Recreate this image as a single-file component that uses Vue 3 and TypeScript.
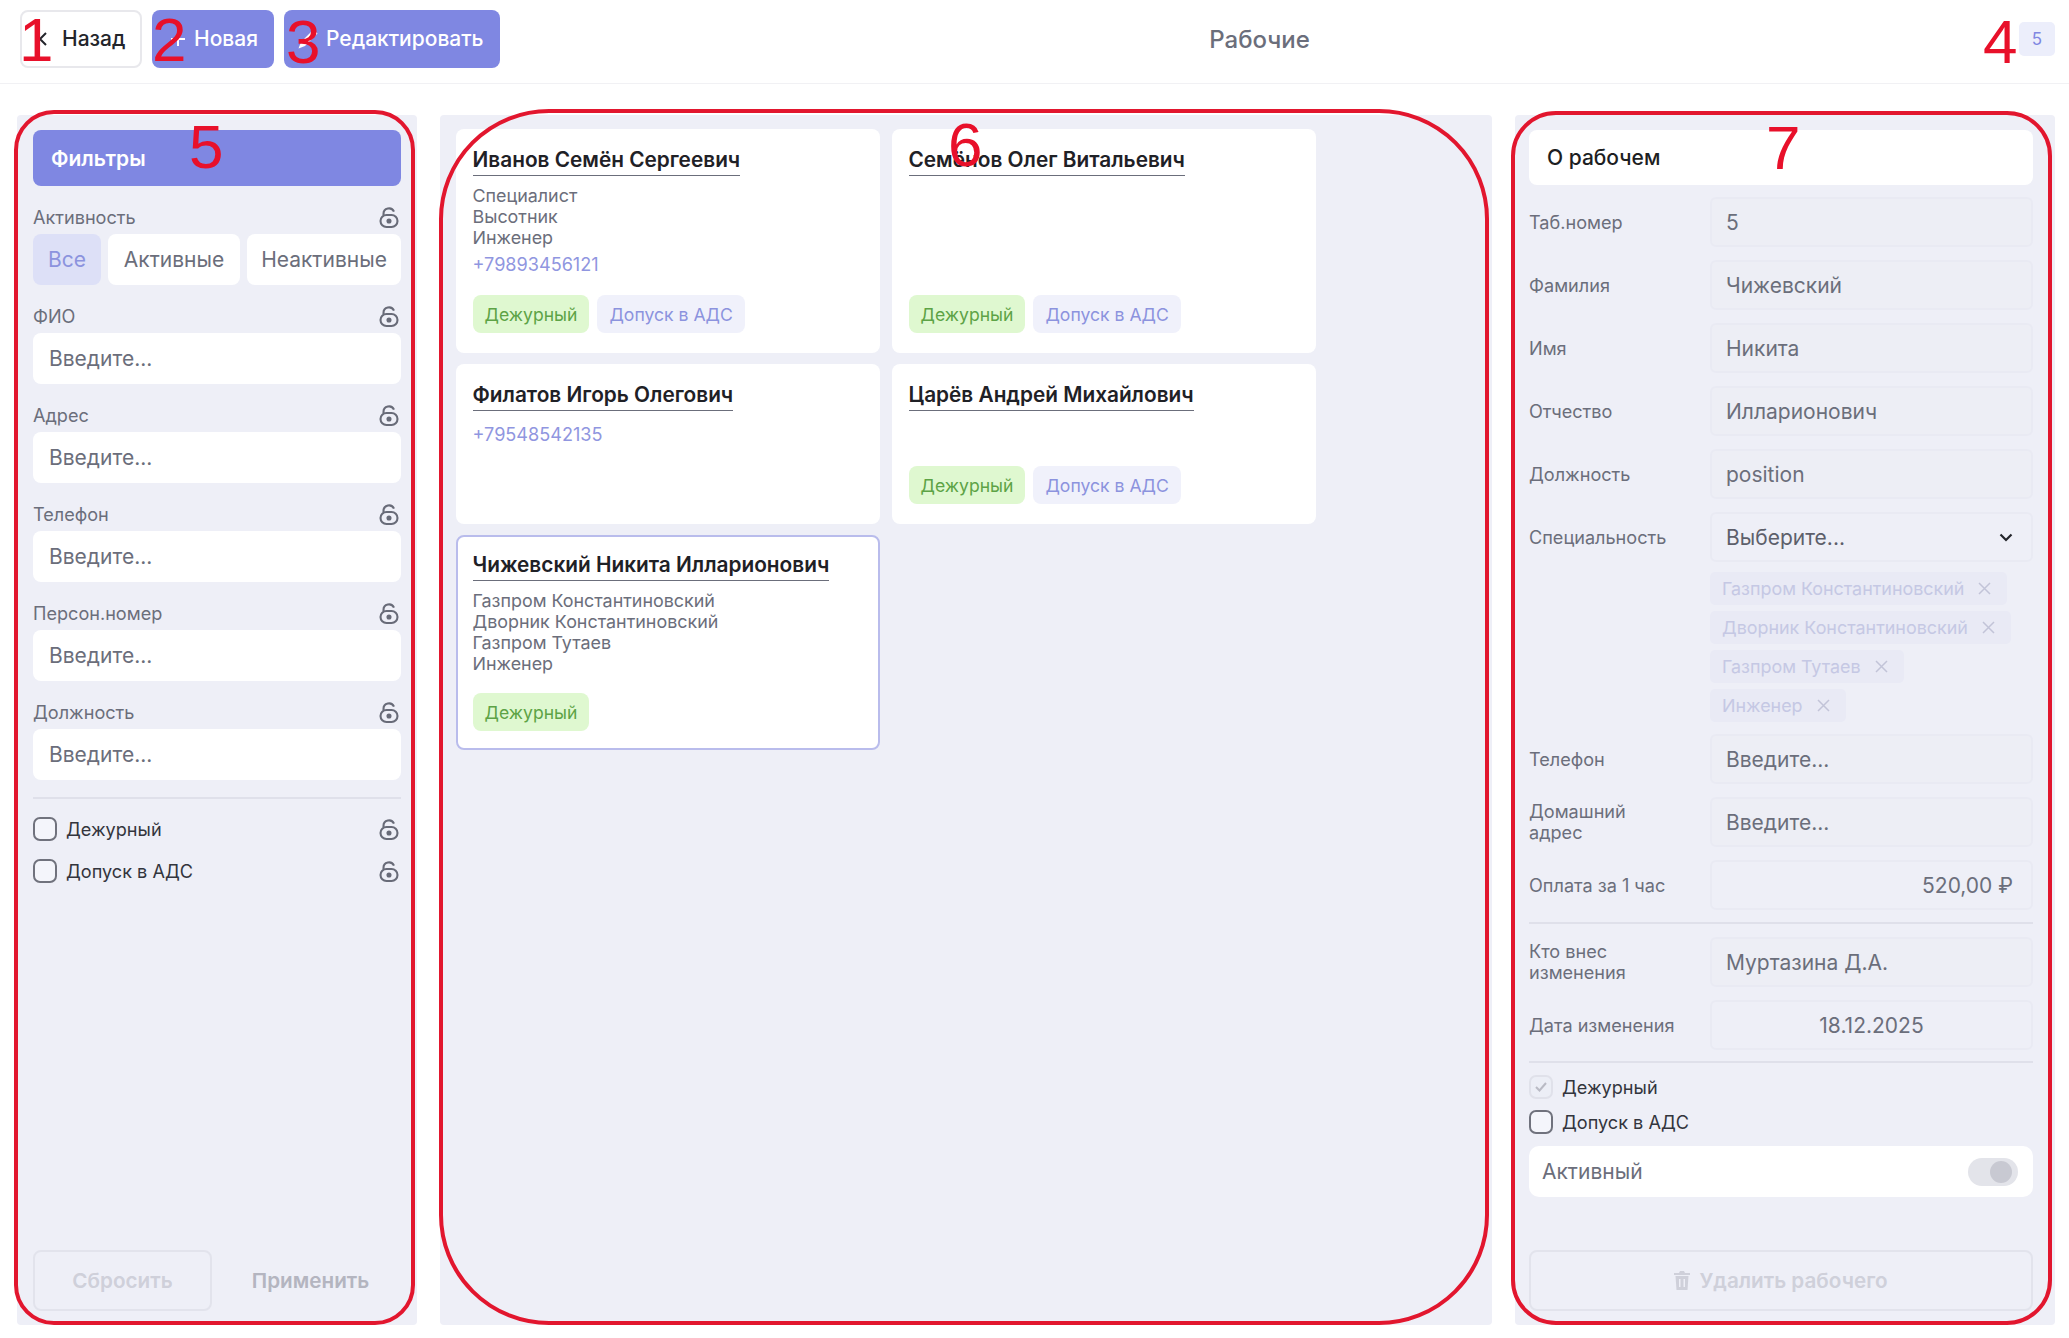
<script setup lang="ts">
interface Worker {
  name: string
  lines: string[]
  phone?: string
  tags: string[]
  selected?: boolean
}

const workers: Worker[] = [
  {
    name: 'Иванов Семён Сергеевич',
    lines: ['Специалист', 'Высотник', 'Инженер'],
    phone: '+79893456121',
    tags: ['Дежурный', 'Допуск в АДС'],
  },
  { name: 'Семёнов Олег Витальевич', lines: [], tags: ['Дежурный', 'Допуск в АДС'] },
  { name: 'Филатов Игорь Олегович', lines: [], phone: '+79548542135', tags: [] },
  { name: 'Царёв Андрей Михайлович', lines: [], tags: ['Дежурный', 'Допуск в АДС'] },
  {
    name: 'Чижевский Никита Илларионович',
    lines: ['Газпром Константиновский', 'Дворник Константиновский', 'Газпром Тутаев', 'Инженер'],
    tags: ['Дежурный'],
    selected: true,
  },
]

const filterFields = ['ФИО', 'Адрес', 'Телефон', 'Персон.номер', 'Должность']
const filterChecks = ['Дежурный', 'Допуск в АДС']
const nameRows = [
  { label: 'Таб.номер', value: '5' },
  { label: 'Фамилия', value: 'Чижевский' },
  { label: 'Имя', value: 'Никита' },
  { label: 'Отчество', value: 'Илларионович' },
  { label: 'Должность', value: 'position' },
]
const specialties = ['Газпром Константиновский', 'Дворник Константиновский', 'Газпром Тутаев', 'Инженер']
const marks = [1, 2, 3, 4, 5, 6, 7]
</script>

<template>
  <div class="page">
    <header class="topbar">
      <button class="btn btn-back">
        <svg width="10" height="14" viewBox="0 0 10 14" fill="none" stroke="currentColor" stroke-width="2"><path d="M8 1 2 7l6 6" /></svg>
        Назад
      </button>
      <button class="btn btn-primary btn-new">
        <svg width="16" height="16" viewBox="0 0 16 16" fill="none" stroke="currentColor" stroke-width="2"><path d="M8 1v14M1 8h14" /></svg>
        Новая
      </button>
      <button class="btn btn-primary btn-edit">
        <svg width="20" height="20" viewBox="0 0 20 20" fill="currentColor"><path d="M15.500 0.500 19.500 4.500 7 17 0.500 19.500 3 13z" /></svg>
        Редактировать
      </button>
      <div class="title">Рабочие</div>
      <div class="count">5</div>
    </header>

    <main class="layout">
      <aside class="panel panel-filters">
        <div class="filters-head">Фильтры</div>

        <div class="filter">
          <div class="filter-label">
            <span>Активность</span>
            <svg class="lock" viewBox="0 0 24 24" fill="none" stroke="currentColor" stroke-width="2.100"><path d="M6.500 10.500V9a5.500 5.500 0 0 1 10.500-2.400" /><rect x="3.500" y="10" width="17" height="12" rx="6" /><circle cx="12" cy="16" r="1.500" fill="currentColor" /></svg>
          </div>
          <div class="segments">
            <div class="segment segment-all">Все</div>
            <div class="segment segment-on">Активные</div>
            <div class="segment segment-off">Неактивные</div>
          </div>
        </div>

        <div v-for="field in filterFields" :key="field" class="filter">
          <div class="filter-label">
            <span>{{ field }}</span>
            <svg class="lock" viewBox="0 0 24 24" fill="none" stroke="currentColor" stroke-width="2.100"><path d="M6.500 10.500V9a5.500 5.500 0 0 1 10.500-2.400" /><rect x="3.500" y="10" width="17" height="12" rx="6" /><circle cx="12" cy="16" r="1.500" fill="currentColor" /></svg>
          </div>
          <div class="filter-input">Введите...</div>
        </div>

        <hr class="divider filter-divider" />

        <div class="filter-checks">
          <div v-for="check in filterChecks" :key="check" class="check-row">
            <span class="checkbox"></span>
            <span>{{ check }}</span>
            <svg class="lock check-lock" viewBox="0 0 24 24" fill="none" stroke="currentColor" stroke-width="2.100"><path d="M6.500 10.500V9a5.500 5.500 0 0 1 10.500-2.400" /><rect x="3.500" y="10" width="17" height="12" rx="6" /><circle cx="12" cy="16" r="1.500" fill="currentColor" /></svg>
          </div>
        </div>

        <div class="filter-actions">
          <div class="btn-reset">Сбросить</div>
          <div class="btn-apply">Применить</div>
        </div>
      </aside>

      <section class="panel panel-list">
        <article v-for="worker in workers" :key="worker.name" class="card" :class="{ selected: worker.selected }">
          <h3 class="card-name">{{ worker.name }}</h3>
          <div v-if="worker.lines.length" class="card-lines">
            <div v-for="line in worker.lines" :key="line">{{ line }}</div>
          </div>
          <div v-if="worker.phone" class="card-phone">{{ worker.phone }}</div>
          <div v-if="worker.tags.length" class="card-tags">
            <span v-for="tag in worker.tags" :key="tag" class="tag" :class="tag === 'Дежурный' ? 'tag-green' : 'tag-lilac'">{{ tag }}</span>
          </div>
        </article>
      </section>

      <aside class="panel panel-detail">
        <div class="detail-head">О рабочем</div>

        <div v-for="row in nameRows" :key="row.label" class="row">
          <label>{{ row.label }}</label>
          <div class="field">{{ row.value }}</div>
        </div>

        <div class="row">
          <label>Специальность</label>
          <div class="field field-select">
            Выберите...
            <svg width="14" height="9" viewBox="0 0 14 9" fill="none" stroke="#23252b" stroke-width="2.200"><path d="m1.500 1.500 5.500 5.500 5.500-5.500" /></svg>
          </div>
        </div>

        <div class="chips">
          <span v-for="item in specialties" :key="item" class="chip">
            {{ item }}
            <svg width="13" height="13" viewBox="0 0 13 13" fill="none" stroke="currentColor" stroke-width="1.500"><path d="m1 1 11 11M12 1 1 12" /></svg>
          </span>
        </div>

        <div class="row row-after-chips">
          <label>Телефон</label>
          <div class="field">Введите...</div>
        </div>
        <div class="row">
          <label>Домашний<br />адрес</label>
          <div class="field">Введите...</div>
        </div>
        <div class="row">
          <label>Оплата за 1 час</label>
          <div class="field field-money">520,00 ₽</div>
        </div>

        <hr class="divider" />

        <div class="row">
          <label>Кто внес<br />изменения</label>
          <div class="field">Муртазина Д.А.</div>
        </div>
        <div class="row">
          <label>Дата изменения</label>
          <div class="field field-date">18.12.2025</div>
        </div>

        <hr class="divider divider-tight" />

        <div class="detail-checks">
          <div class="check-row">
            <span class="checkbox checkbox-on">
              <svg width="12" height="10" viewBox="0 0 12 10" fill="none" stroke="#b9bac4" stroke-width="2"><path d="m1 5 3.500 3.500L11 1" /></svg>
            </span>
            <span>Дежурный</span>
          </div>
          <div class="check-row">
            <span class="checkbox"></span>
            <span>Допуск в АДС</span>
          </div>
        </div>

        <div class="active-row">
          <span>Активный</span>
          <span class="toggle"><span class="toggle-knob"></span></span>
        </div>

        <div class="btn-delete">
          <svg width="16" height="19" viewBox="0 0 16 19" fill="currentColor"><path d="M6 0h4l1 2h5v2H0V2h5zM1.500 5h13L13.500 19h-11zM5 8v8h1.500V8zm4.500 0v8H11V8z" /></svg>
          Удалить рабочего
        </div>
      </aside>
    </main>

    <div class="ring ring-filters"></div>
    <div class="ring ring-list"></div>
    <div class="ring ring-detail"></div>
    <span v-for="mark in marks" :key="mark" class="mark" :class="`mark-${mark}`">{{ mark }}</span>
  </div>
</template>

<style scoped>
.page {
  position: relative;
  width: 2069px;
  height: 1338px;
  overflow: hidden;
  background: #fff;
  color: #6b6e7b;
  font-family: Inter, "Noto Sans", sans-serif;
  font-size: 18.100px;
}

.topbar {
  display: flex;
  align-items: center;
  gap: 10px;
  height: 84px;
  box-sizing: border-box;
  padding: 0 14px 6px 20px;
  border-bottom: 1px solid #f1f1f4;
}
.btn {
  display: flex;
  align-items: center;
  height: 58px;
  box-sizing: border-box;
  border-radius: 8px;
  font: 500 21px Inter, sans-serif;
}
.btn-back {
  width: 122px;
  padding: 0 0 0 16px;
  gap: 14px;
  background: #fff;
  border: 2px solid #e8e8ec;
  color: #23252b;
}
.btn-primary {
  background: #7f87e2;
  border: 0;
  color: #fff;
  gap: 8px;
}
.btn-new {
  width: 122px;
  padding: 0 0 0 18px;
}
.btn-edit {
  width: 216px;
  padding: 0 0 0 14px;
}
.title {
  flex: 1;
  padding: 2px 0 0;
  text-align: center;
  font-size: 24px;
  font-weight: 500;
}
.count {
  width: 36px;
  height: 34px;
  line-height: 34px;
  text-align: center;
  border-radius: 5px;
  background: #eceefb;
  color: #7f87e2;
  font-size: 17px;
}

.layout {
  display: grid;
  grid-template-columns: 400px 1052px 540px;
  gap: 23px;
  height: 1210px;
  padding: 31px 0 0 17px;
}
.panel {
  display: flex;
  flex-direction: column;
  box-sizing: border-box;
  padding: 15px 16px 12px;
  background: #eeeff7;
  border-radius: 4px;
}
.panel-filters {
  padding-bottom: 14px;
}

.filters-head {
  display: flex;
  align-items: center;
  height: 56px;
  flex: none;
  padding-left: 18px;
  border-radius: 8px;
  background: #7f87e2;
  color: #fff;
  font-size: 21px;
  font-weight: 600;
}
.filter {
  margin-top: 20px;
}
.filter-label {
  display: flex;
  justify-content: space-between;
  align-items: center;
  height: 22px;
  margin-bottom: 6px;
}
.lock {
  flex: none;
  width: 24px;
  height: 24px;
  color: #686b78;
}
.segments {
  display: flex;
  gap: 7px;
  height: 51px;
}
.segment {
  display: flex;
  align-items: center;
  justify-content: center;
  background: #fff;
  border-radius: 8px;
  font-size: 21px;
}
.segment-all {
  width: 68px;
  background: #dde0f7;
  color: #8c93de;
}
.segment-on {
  width: 132px;
}
.segment-off {
  flex: 1;
}
.filter-input {
  display: flex;
  align-items: center;
  height: 51px;
  padding-left: 16px;
  background: #fff;
  border-radius: 8px;
  font-size: 21px;
}
.divider {
  flex: none;
  width: 100%;
  height: 2px;
  margin: 12px 0 0;
  border: 0;
  background: #dfe0ea;
}
.filter-divider {
  margin-top: 17px;
}
.filter-checks {
  display: flex;
  flex-direction: column;
  gap: 16px;
  margin-top: 17px;
}
.check-row {
  display: flex;
  align-items: center;
  gap: 9px;
  height: 26px;
  color: #33353d;
}
.check-lock {
  margin-left: auto;
}
.checkbox {
  display: flex;
  align-items: center;
  justify-content: center;
  width: 24px;
  height: 24px;
  box-sizing: border-box;
  border: 2px solid #70727d;
  border-radius: 7px;
  background: #f4f5fb;
}
.checkbox-on {
  border-color: #e0e1ea;
  background: #eceef6;
}
.filter-actions {
  display: flex;
  margin-top: auto;
  align-items: center;
  font-size: 20.700px;
  font-weight: 600;
}
.btn-reset {
  display: flex;
  align-items: center;
  justify-content: center;
  width: 179px;
  height: 61px;
  box-sizing: border-box;
  border: 2px solid #e2e3ec;
  border-radius: 8px;
  color: #cfd0da;
}
.btn-apply {
  flex: 1;
  padding-left: 8px;
  text-align: center;
  color: #b4b5c0;
}

.panel-list {
  display: grid;
  grid-template-columns: repeat(2, 424px);
  grid-template-rows: 224px 160px 215px;
  align-content: start;
  column-gap: 12px;
  row-gap: 11px;
  padding-top: 14px;
}
.card {
  display: flex;
  flex-direction: column;
  align-items: flex-start;
  box-sizing: border-box;
  padding: 19px 16.500px 20px;
  background: #fff;
  border-radius: 8px;
}
.card.selected {
  border: 2px solid #b9bcec;
  padding: 16px 14.500px 17px;
}
.card-name {
  margin: 0;
  padding-bottom: 3px;
  border-bottom: 1px solid #6b6e7b;
  color: #1f2126;
  font-size: 20.800px;
  font-weight: 600;
  line-height: 24px;
}
.card-lines {
  margin-top: 9px;
  font-size: 17.900px;
  line-height: 21px;
}
.card-phone {
  margin-top: 3px;
  color: #9096e0;
  line-height: 26px;
}
.card-name + .card-phone {
  margin-top: 10px;
}
.card-tags {
  display: flex;
  gap: 8px;
  margin-top: auto;
}
.tag {
  display: flex;
  align-items: center;
  height: 38px;
  padding: 0 12px;
  border-radius: 8px;
  font-size: 17.600px;
}
.tag-green {
  background: #dff8d0;
  color: #5da346;
}
.tag-lilac {
  background: #f0f1fb;
  color: #8c93de;
}

.panel-detail {
  padding: 15px 22px 14px 14px;
}
.detail-head {
  display: flex;
  align-items: center;
  flex: none;
  height: 55px;
  margin-bottom: -1px;
  padding-left: 18px;
  border-radius: 8px;
  background: #fff;
  color: #1d1e22;
  font-size: 21px;
  font-weight: 500;
}
.row {
  display: grid;
  grid-template-columns: 181px 323px;
  align-items: center;
  margin-top: 13px;
  line-height: 21px;
}
.row-after-chips {
  margin-top: 12px;
}
.field {
  display: flex;
  align-items: center;
  height: 50px;
  box-sizing: border-box;
  padding: 0 14px;
  border: 2px solid #e9eaf3;
  border-radius: 6px;
  background: #edeef5;
  font-size: 21px;
}
.field-select {
  justify-content: space-between;
  padding-right: 18px;
  background: #eeeff7;
  color: #5d5f6b;
}
.field-money {
  justify-content: flex-end;
  padding-right: 18px;
  background: #eeeff7;
}
.field-date {
  justify-content: center;
  background: #eeeff7;
}
.chips {
  display: flex;
  flex-direction: column;
  align-items: flex-start;
  gap: 6px;
  margin: 10px 0 0 181px;
}
.chip {
  display: flex;
  align-items: center;
  gap: 14px;
  height: 33px;
  padding: 0 16px 0 12px;
  border-radius: 5px;
  background: #e9eaf5;
  color: #c5c8e4;
  font-size: 17.900px;
}
.chip svg {
  color: #c2c4d8;
}
.divider-tight {
  margin-top: 11px;
}
.detail-checks {
  display: flex;
  flex-direction: column;
  gap: 9px;
  margin-top: 11px;
}
.active-row {
  display: flex;
  align-items: center;
  justify-content: space-between;
  flex: none;
  height: 51px;
  margin-top: 11px;
  padding: 0 15px 0 13px;
  border-radius: 10px;
  background: #fff;
  font-size: 21px;
}
.toggle {
  display: flex;
  justify-content: flex-end;
  align-items: center;
  width: 50px;
  height: 28px;
  box-sizing: border-box;
  padding-right: 6px;
  border-radius: 14px;
  background: #e3e4ea;
}
.toggle-knob {
  width: 22px;
  height: 22px;
  border-radius: 50%;
  background: #c8c9d2;
}
.btn-delete {
  display: flex;
  align-items: center;
  justify-content: center;
  gap: 9px;
  flex: none;
  height: 61px;
  box-sizing: border-box;
  margin-top: auto;
  border: 2px solid #e2e3ec;
  border-radius: 8px;
  color: #cfd0da;
  font-size: 20.700px;
  font-weight: 600;
}

/* red hand-drawn annotations on top of the screenshot */
.ring {
  position: absolute;
  box-sizing: border-box;
  border: 4px solid #e2162e;
  pointer-events: none;
}
.ring-filters {
  left: 14px;
  top: 110px;
  width: 401px;
  height: 1215px;
  border-radius: 40px;
}
.ring-list {
  left: 439px;
  top: 109px;
  width: 1050px;
  height: 1216px;
  border-radius: 110px;
}
.ring-detail {
  left: 1511px;
  top: 111px;
  width: 541px;
  height: 1214px;
  border-radius: 45px;
}
.mark {
  position: absolute;
  color: #e8102a;
  font-family: "Liberation Sans", sans-serif;
  font-size: 62px;
  line-height: 1;
}
.mark-1 { left: 19px; top: 9px; }
.mark-2 { left: 152px; top: 9px; }
.mark-3 { left: 286px; top: 11px; }
.mark-4 { left: 1983px; top: 11px; }
.mark-5 { left: 189px; top: 116px; }
.mark-6 { left: 948px; top: 114px; }
.mark-7 { left: 1766px; top: 117px; }
</style>

<style>
body {
  background: #fff;
}
</style>
